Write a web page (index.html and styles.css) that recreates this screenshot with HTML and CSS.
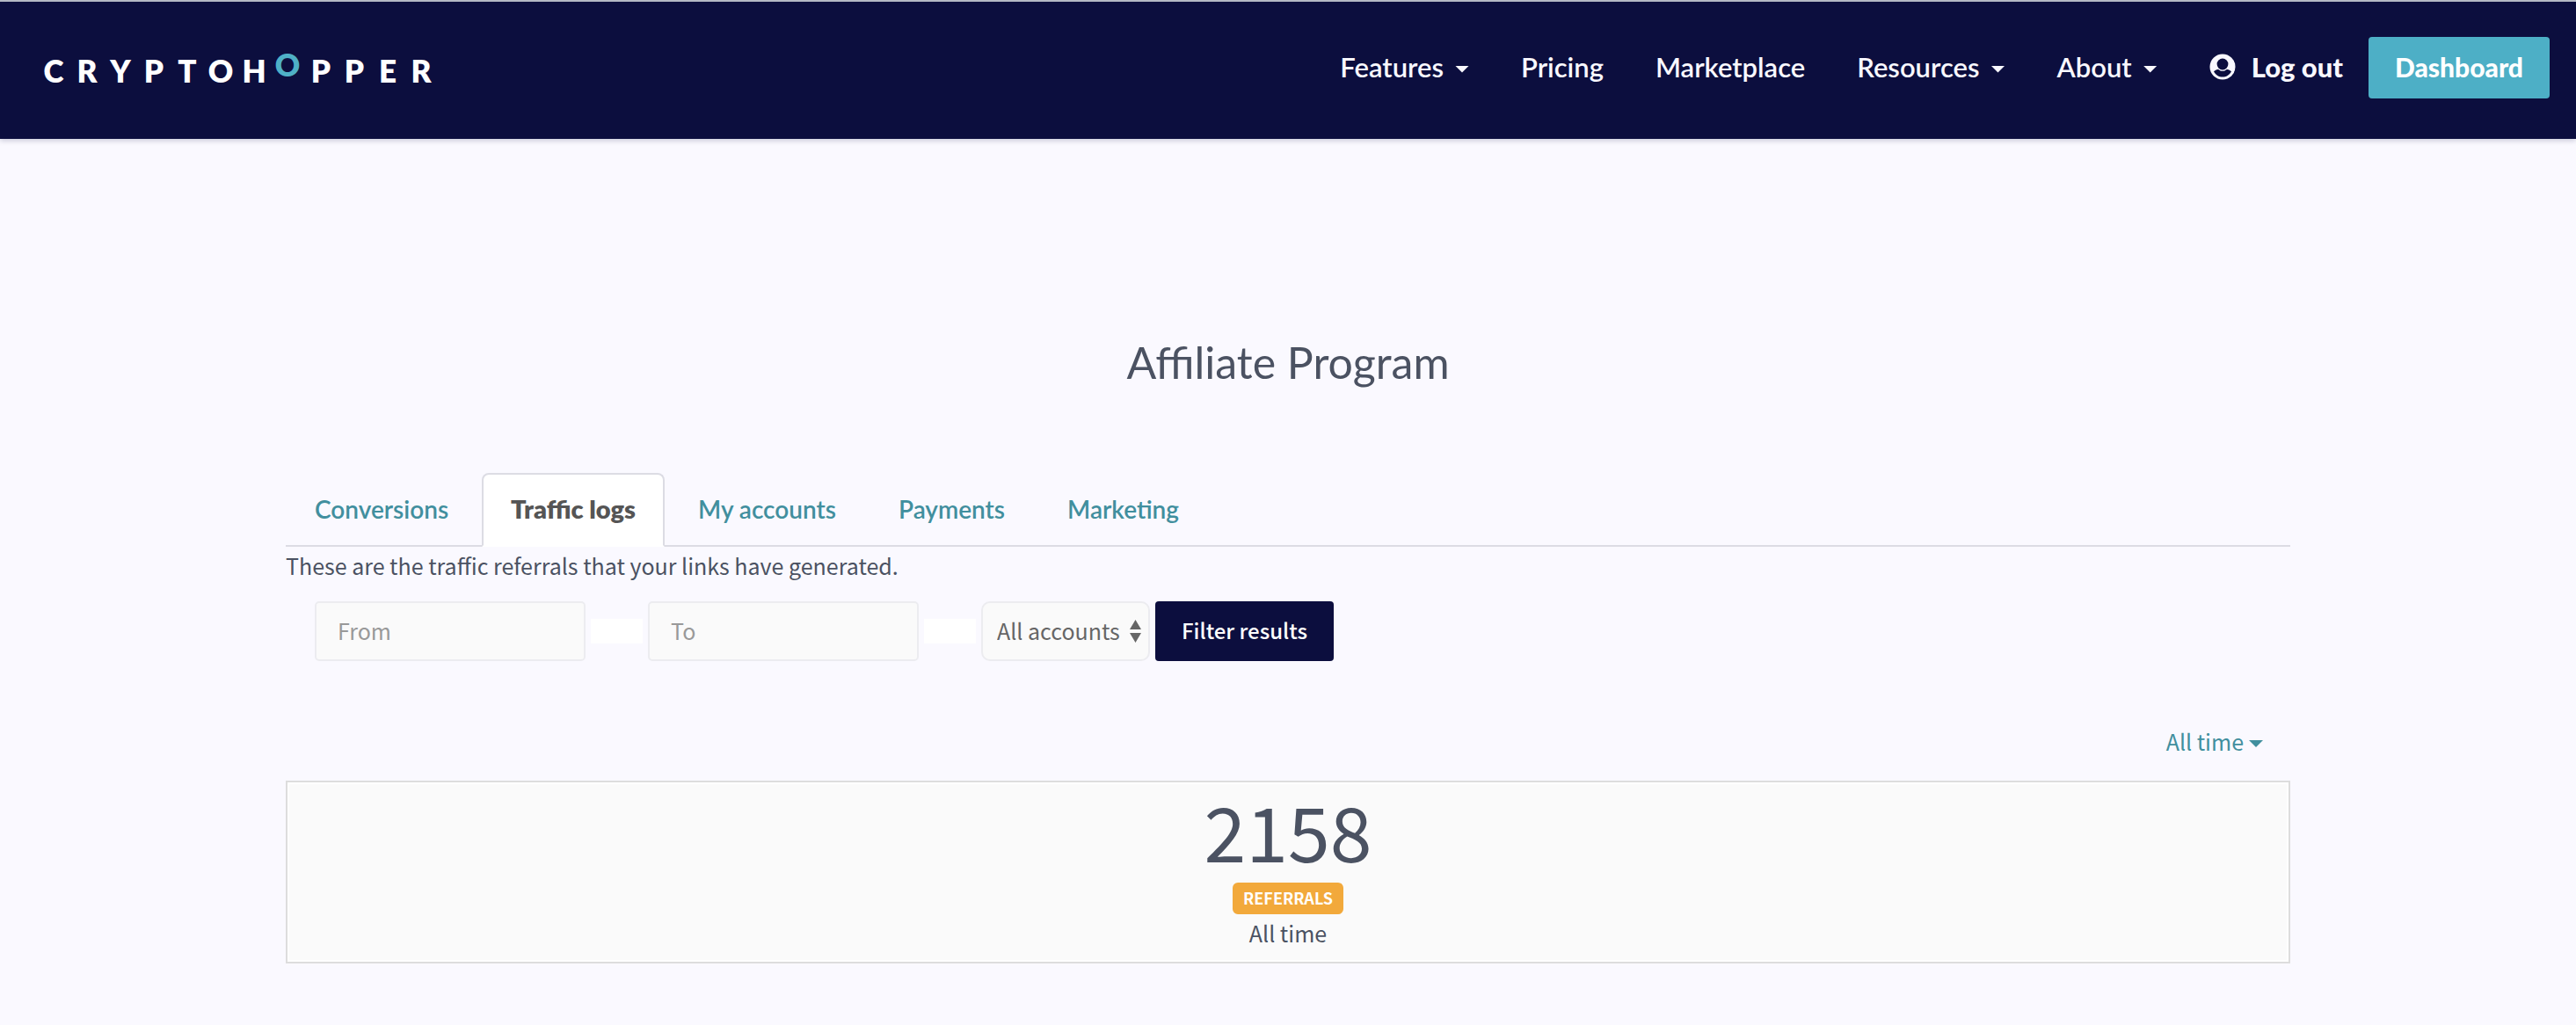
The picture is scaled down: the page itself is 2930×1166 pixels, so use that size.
FILE: index.html
```html
<!DOCTYPE html>
<html lang="en">
<head>
<meta charset="utf-8">
<meta name="viewport" content="width=device-width, initial-scale=1">
<title>Affiliate Program - Cryptohopper</title>
<link rel="stylesheet" href="styles.css">
</head>
<body>
<header class="topbar">
  <a class="logo" href="#" aria-label="Cryptohopper">
    <span>C</span><span>R</span><span>Y</span><span>P</span><span>T</span><span>O</span><span>H</span><span class="logo-hop">O</span><span>P</span><span>P</span><span>E</span><span>R</span>
  </a>
  <nav class="menu">
    <a class="menu-link" href="#">Features <i class="caret"></i></a>
    <a class="menu-link" href="#">Pricing</a>
    <a class="menu-link" href="#">Marketplace</a>
    <a class="menu-link" href="#">Resources <i class="caret"></i></a>
    <a class="menu-link" href="#">About <i class="caret"></i></a>
    <a class="menu-link menu-logout" href="#">
      <svg class="user-icon" viewBox="0 0 30 30" aria-hidden="true">
        <circle cx="15" cy="15" r="14.5" fill="#f9f8ff"/>
        <circle cx="15" cy="12" r="6.4" fill="#0c0e3e"/>
        <path d="M5 20.2C7 18.6 8.6 18 10.3 18c1.600 1.300 3 1.800 4.700 1.800s3.100-.5 4.700-1.800c1.700 0 3.300.6 5.300 2.200C22.800 24.200 19.200 26.600 15 26.600S7.200 24.200 5 20.200z" fill="#0c0e3e"/>
      </svg>
      Log out</a>
    <a class="btn btn-dashboard" href="#">Dashboard</a>
  </nav>
</header>

<main class="container">
  <h1 class="title">Affiliate Program</h1>

  <nav class="tabs">
    <a class="tab" href="#">Conversions</a>
    <a class="tab tab-active" href="#" aria-current="page">Traffic logs</a>
    <a class="tab" href="#">My accounts</a>
    <a class="tab" href="#">Payments</a>
    <a class="tab" href="#">Marketing</a>
  </nav>

  <p class="intro">These are the traffic referrals that your links have generated.</p>

  <form class="filters">
    <input class="field" type="text" placeholder="From" aria-label="From">
    <span class="addon"></span>
    <input class="field" type="text" placeholder="To" aria-label="To">
    <span class="addon"></span>
    <span class="select-wrap">
      <select class="select" aria-label="Account"><option>All accounts</option></select>
      <svg class="select-arrows" viewBox="0 0 13 26" aria-hidden="true"><path d="M6.500 0L13 11H0zM6.500 26L0 15h13z" fill="#666"/></svg>
    </span>
    <button class="btn btn-filter" type="button">Filter results</button>
  </form>

  <div class="period">
    <a class="period-link" href="#">All time<i class="caret"></i></a>
  </div>

  <section class="stat">
    <div class="stat-number">2158</div>
    <span class="badge">REFERRALS</span>
    <div class="stat-period">All time</div>
  </section>
</main>
</body>
</html>
```
FILE: styles.css
```css
* { box-sizing: border-box; }

body {
  margin: 0;
  background: #faf9ff;
  color: #4b5262;
  font: 25px/38px "Noto Sans CJK JP", "Noto Sans", sans-serif;
}

a { text-decoration: none; }

.topbar {
  display: flex;
  align-items: flex-start;
  justify-content: space-between;
  min-height: 158px;
  padding: 40px 30px 0 42px;
  border-top: 2px solid #b4b9c4;
  background: #0c0e3e;
  box-shadow: 0 2px 6px rgba(12, 14, 62, 0.2);
  font-family: Lato, sans-serif;
}

.logo {
  display: grid;
  grid-template-columns: repeat(12, 38px);
  padding-top: 17px;
  color: #fff;
  font-size: 35px;
  font-weight: 800;
  line-height: 42px;
  text-align: center;
}

.logo-hop {
  padding-bottom: 7px;
  margin-top: -7px;
  color: #4fb0c6;
}

.menu {
  display: flex;
  gap: 59px;
}

.menu-link {
  display: flex;
  align-items: center;
  height: 67px;
  color: #f9f8ff;
  font-size: 31px;
  font-weight: 600;
  white-space: nowrap;
}

.caret {
  width: 16px;
  height: 8px;
  margin: 6px 0 0 13px;
  background: currentColor;
  clip-path: polygon(0 0, 100% 0, 50% 100%);
}

.menu-logout {
  gap: 18px;
  margin-right: -30px;
  font-weight: 900;
}

.user-icon {
  width: 30px;
  height: 30px;
}

.btn {
  border: 0;
  border-radius: 4px;
  color: #fff;
  text-align: center;
  white-space: nowrap;
}

.btn-dashboard {
  padding: 0 30px 2px;
  background: #4dafc6;
  font-size: 30px;
  font-weight: 900;
  line-height: 68px;
}

.container {
  max-width: 2280px;
  margin: 0 auto;
}

.title {
  margin: 224px 0 96px;
  font: 400 50px/60px Lato, sans-serif;
  text-align: center;
}

.tabs {
  display: flex;
  gap: 5px;
  border-bottom: 2px solid #dcdce4;
  font: 600 28px/78px Lato, sans-serif;
}

.tab {
  margin-bottom: -2px;
  padding: 0 31px 2px;
  border: 2px solid transparent;
  border-radius: 8px 8px 0 0;
  color: #418f9e;
}

.tab-active {
  border-color: #dcdce4 #dcdce4 #fff;
  background: #fff;
  color: #555;
  font-size: 29px;
  font-weight: 800;
}

.intro {
  margin: 2px 0 22px;
}

.filters {
  display: flex;
  align-items: center;
  gap: 6px;
  padding-left: 33px;
}

.field,
.select {
  height: 68px;
  border: 2px solid #ececf0;
  border-radius: 5px;
  background: #fafafa;
  color: #666;
  font: inherit;
}

.field {
  width: 308px;
  padding: 0 24px 2px;
}

.field::placeholder { color: #999; }

.addon {
  width: 59px;
  height: 28px;
  background: #fff;
}

.select-wrap {
  position: relative;
  display: flex;
}

.select {
  width: 192px;
  padding: 0 16px 2px;
  border-radius: 10px;
  appearance: none;
}

.select-arrows {
  position: absolute;
  top: 21px;
  right: 10px;
  width: 13px;
  height: 26px;
  pointer-events: none;
}

.btn-filter {
  height: 68px;
  padding: 0 30px 2px;
  background: #0c0e3e;
  font: inherit;
  font-size: 24px;
  font-weight: 500;
}

.period {
  display: flex;
  justify-content: flex-end;
  padding: 72px 31px 26px;
}

.period-link {
  display: flex;
  align-items: center;
  color: #418f9e;
}

.period-link .caret {
  margin-left: 6px;
}

.stat {
  padding: 4px 0 14px;
  border: 2px solid #ddd;
  background: #fafafa;
  box-shadow: inset 0 0 0 2px #fff;
  text-align: center;
}

.stat-number {
  font-size: 86px;
  line-height: 100px;
}

.badge {
  display: block;
  width: fit-content;
  margin: 10px auto 2px;
  padding: 0 12px 2px;
  border-radius: 6px;
  background: #f2a93b;
  color: #fff;
  font-size: 18px;
  font-weight: 700;
  line-height: 34px;
}
```
